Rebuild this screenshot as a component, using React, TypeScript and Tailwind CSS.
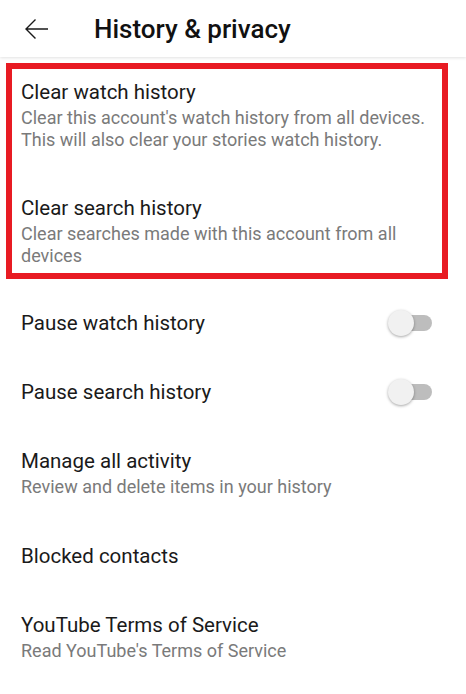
import type { FC } from 'react';

const font = { fontFamily: 'Roboto, "Noto Sans", sans-serif' };

const Toggle: FC = () => (
  <div className="relative mr-[34px] h-[26px] w-[44px]">
    <div className="absolute right-0 top-[5px] h-[16px] w-[36px] rounded-full bg-[#bdbdbd]" />
    <div className="absolute left-0 top-0 h-[26px] w-[26px] rounded-full bg-[#f1f1f1] shadow-[0_1px_3px_rgba(0,0,0,0.35)]" />
  </div>
);

const Item: FC<{ title: string; sub?: string; className?: string }> = ({ title, sub, className }) => (
  <div className={className}>
    <div className="text-[20.5px] leading-[26px] text-[#1a1a1a]">{title}</div>
    {sub && <div className="mt-[2px] text-[18px] leading-[22px] text-[#7a7a7a]">{sub}</div>}
  </div>
);

export default function App() {
  return (
    <div className="h-[694px] w-[466px] overflow-hidden bg-white" style={font}>
      <header className="flex h-[57px] items-center shadow-[0_1px_3px_rgba(0,0,0,0.12)]">
        <svg className="ml-[25px] h-[24px] w-[24px]" viewBox="0 0 24 24" fill="none" stroke="#1a1a1a" strokeWidth="1.4">
          <path d="M1 12h22M10.5 2.5 1 12l9.5 9.5" />
        </svg>
        <h1 className="ml-[45px] text-[26px] font-medium leading-none text-[#111]">History &amp; privacy</h1>
      </header>

      <div className="ml-[6px] mt-[6px] w-[442px] border-[6px] border-[#e81b23] pb-[6px] pl-[9px] pr-[6px] pt-[10px]">
        <Item
          title="Clear watch history"
          sub="Clear this account's watch history from all devices. This will also clear your stories watch history."
        />
        <Item
          className="mt-[44px] pr-[20px]"
          title="Clear search history"
          sub="Clear searches made with this account from all devices"
        />
      </div>

      <div className="pl-[21px]">
        <div className="mt-[20px] flex h-[48px] items-center justify-between">
          <span className="text-[20.5px] text-[#1a1a1a]">Pause watch history</span>
          <Toggle />
        </div>
        <div className="mt-[21px] flex h-[48px] items-center justify-between">
          <span className="text-[20.5px] text-[#1a1a1a]">Pause search history</span>
          <Toggle />
        </div>
        <Item className="mt-[32px]" title="Manage all activity" sub="Review and delete items in your history" />
        <Item className="mt-[45px]" title="Blocked contacts" />
        <Item className="mt-[43px]" title="YouTube Terms of Service" sub="Read YouTube's Terms of Service" />
      </div>
    </div>
  );
}
